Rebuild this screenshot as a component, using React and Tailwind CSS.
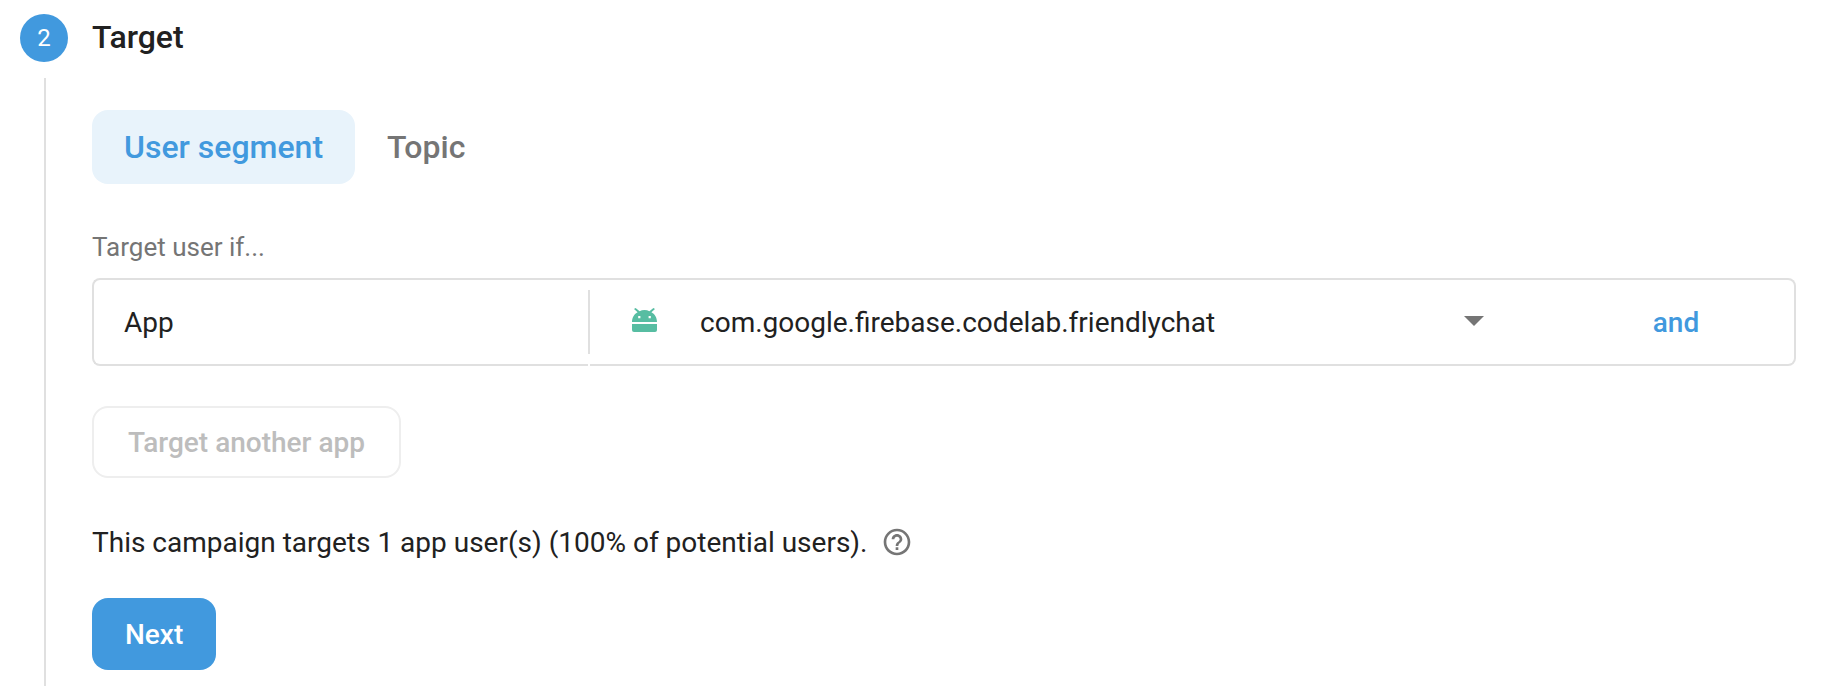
function AndroidIcon() {
  return (
    <svg viewBox="0 0 25 24" className="h-6 w-[25px]" fill="#57bda2" aria-hidden="true">
      <path
        fillRule="evenodd"
        d="M0 14C0 9.400 2.500 5.600 5.600 4.200L2 1 3.600 0 7.600 3.200C9 2.500 10.700 2.100 12.500 2.100S16 2.500 17.400 3.200L21.400 0 23 1 19.400 4.200C22.500 5.600 25 9.400 25 14ZM6.200 8V10.200H8.400V8ZM16.600 8V10.200H18.800V8Z"
      />
      <path d="M0 16H25V22A2 2 0 0 1 23 24H2A2 2 0 0 1 0 22Z" />
    </svg>
  );
}

function HelpIcon() {
  return (
    <svg viewBox="0 0 24 24" className="size-8" fill="#757575" aria-hidden="true">
      <path d="M11 18h2v-2h-2v2zm1-16C6.480 2 2 6.480 2 12s4.480 10 10 10 10-4.480 10-10S17.520 2 12 2zm0 18c-4.410 0-8-3.590-8-8s3.590-8 8-8 8 3.590 8 8-3.590 8-8 8zm0-14c-2.210 0-4 1.790-4 4h2c0-1.100.9-2 2-2s2 .9 2 2c0 2-3 1.750-3 5h2c0-2.250 3-2.500 3-5 0-2.210-1.790-4-4-4z" />
    </svg>
  );
}

export default function App() {
  return (
    <section className="flex min-h-screen gap-6 bg-white pt-3.5 pr-[26px] pl-5 font-[Roboto,sans-serif] text-[28px] leading-8 text-[#212121]">
      <div className="flex w-12 shrink-0 flex-col items-center gap-4">
        <span className="flex size-12 items-center justify-center rounded-full bg-[#4199de] text-2xl text-white">
          2
        </span>
        <div className="ml-0.5 w-0.5 flex-1 bg-[#e0e0e0]" />
      </div>

      <div className="flex min-w-0 flex-1 flex-col items-start pb-4">
        <h2 className="flex h-[46px] items-center text-[32px] font-medium">Target</h2>

        <div className="mt-[50px] flex text-[32px] font-medium" role="tablist">
          <button
            type="button"
            role="tab"
            aria-selected="true"
            className="h-[74px] rounded-2xl bg-[#e8f3fb] px-8 text-[#4199de]"
          >
            User segment
          </button>
          <button
            type="button"
            role="tab"
            aria-selected="false"
            className="h-[74px] rounded-2xl px-8 text-[#757575]"
          >
            Topic
          </button>
        </div>

        <label htmlFor="target-app" className="mt-[47px] text-[26px] text-[#757575]">
          Target user if...
        </label>

        <div className="mt-[15px] grid h-22 w-full grid-cols-[496fr_2px_1206fr] items-stretch">
          <div className="flex items-center rounded-l-lg border-y-2 border-l-2 border-[#e0e0e0] pt-0.5 pl-[30px]">
            App
          </div>
          <div className="border-t-2 border-[#e0e0e0] pt-2.5">
            <div className="h-16 w-0.5 bg-[#e0e0e0]" />
          </div>
          <div className="flex items-stretch rounded-r-lg border-y-2 border-r-2 border-[#e0e0e0]">
            <div className="relative flex flex-1 items-center">
              <select
                id="target-app"
                className="h-full w-full appearance-none bg-transparent pt-0.5 pr-24 pl-[110px]"
              >
                <option>com.google.firebase.codelab.friendlychat</option>
              </select>
              <span className="pointer-events-none absolute inset-y-0 left-[42px] flex items-center pb-1">
                <AndroidIcon />
              </span>
              <span className="pointer-events-none absolute inset-y-0 right-[74px] flex items-center pb-0.5">
                <svg viewBox="0 0 20 10" className="h-2.5 w-5" fill="#757575" aria-hidden="true">
                  <path d="M0 0H20L10 10Z" />
                </svg>
              </span>
            </div>
            <button type="button" className="w-[236px] pt-0.5 font-medium text-[#4199de]">
              and
            </button>
          </div>
        </div>

        <button
          type="button"
          disabled
          className="mt-10 h-18 rounded-2xl border-2 border-[#eeeeee] px-[34px] pt-0.5 font-medium text-[#bdbdbd]"
        >
          Target another app
        </button>

        <div className="mt-12 flex items-start gap-3.5">
          <p className="leading-[34px]">
            This campaign targets 1 app user(s) (100% of potential users).
          </p>
          <button type="button" aria-label="About potential users">
            <HelpIcon />
          </button>
        </div>

        <button
          type="button"
          className="mt-[38px] h-18 rounded-2xl bg-[#4199de] px-[33px] pt-0.5 font-medium text-white"
        >
          Next
        </button>
      </div>
    </section>
  );
}
